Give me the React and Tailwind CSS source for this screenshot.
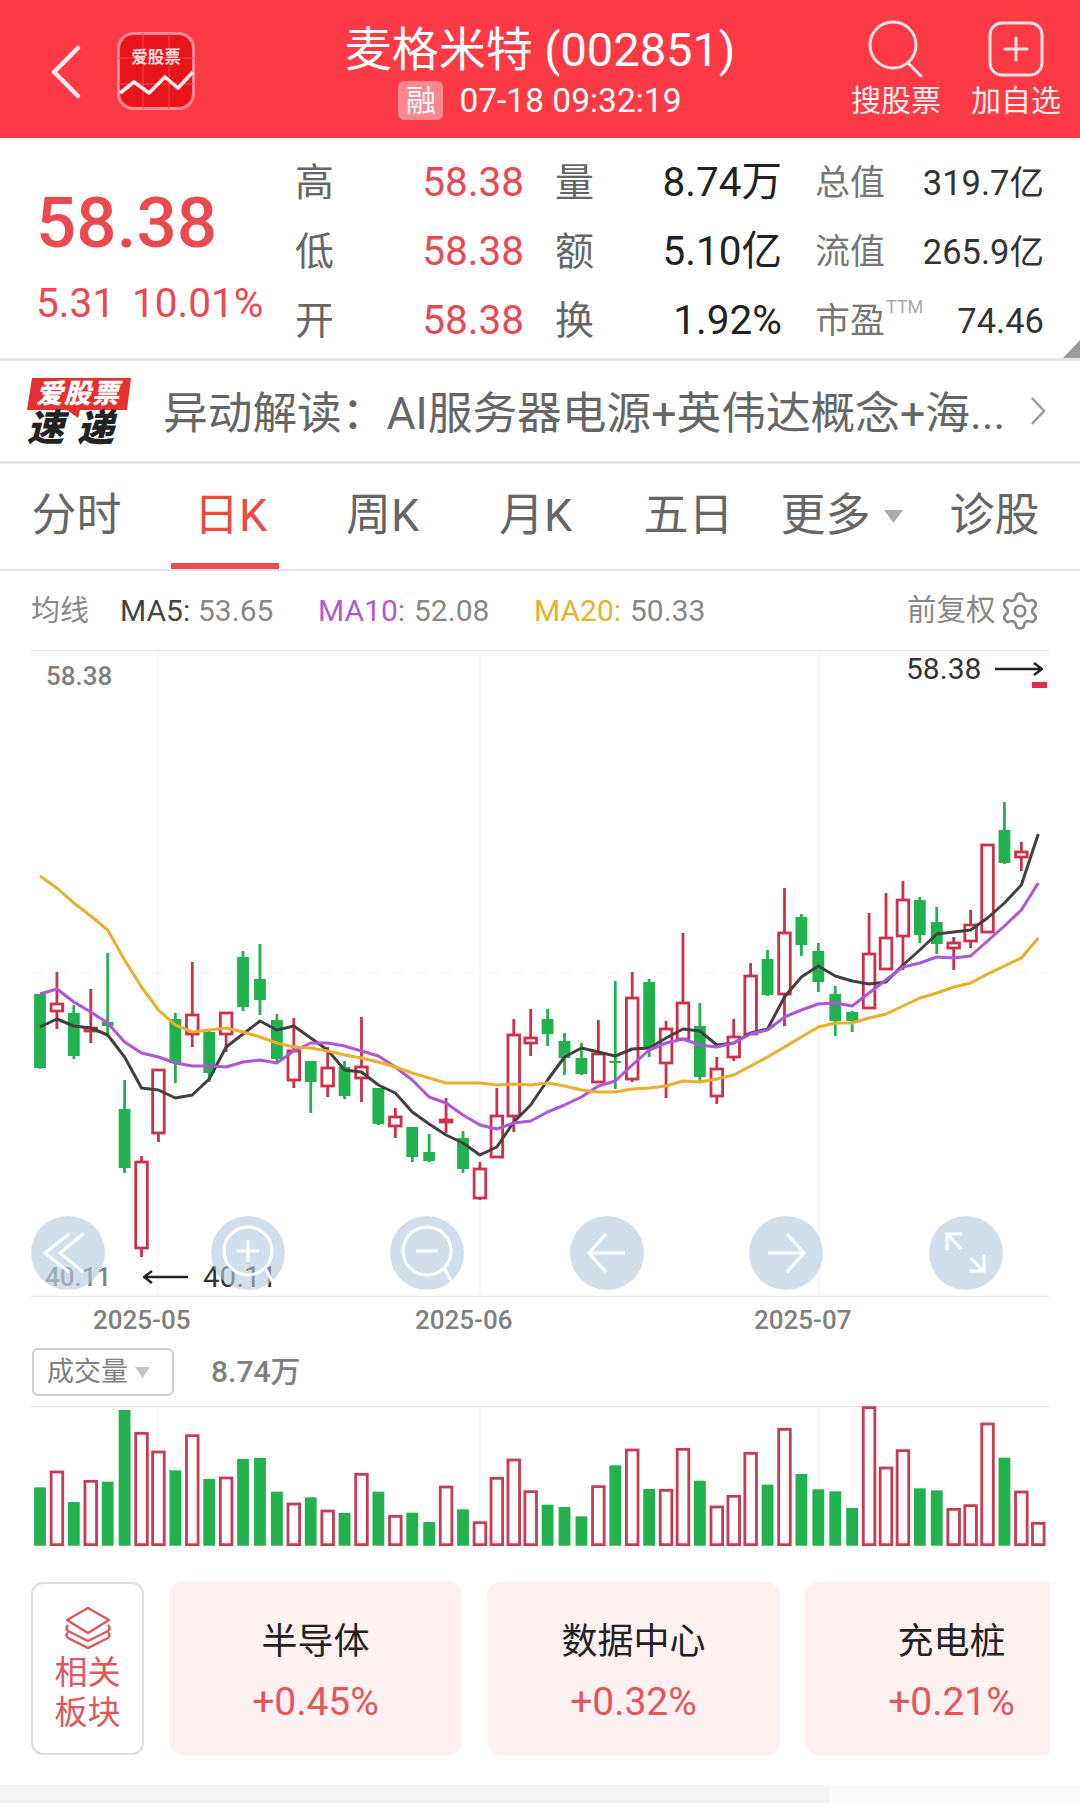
import React from 'react';
import { Settings } from 'lucide-react';

const RED = '#cf3049';
const GREEN = '#21b14f';
const X = (i) => 40 + i * 16.92;

// [colour, high, bodyTop, bodyBottom, low]
const candles = [
  ['g',994,994,1068,1069],['r',972,1003,1012,1029],['g',1005,1013,1056,1059],['r',989,1027,1032,1043],['g',953,1022,1026,1037],
  ['g',1080,1109,1168,1173],['r',1156,1161,1249,1257],['r',1069,1069,1134,1142],['g',1013,1019,1063,1083],['r',962,1014,1035,1047],
  ['g',1030,1032,1073,1082],['r',1012,1012,1035,1052],['g',951,957,1007,1011],['g',944,979,1000,1015],['g',1014,1020,1059,1062],
  ['r',1018,1050,1081,1088],['g',1061,1061,1082,1113],['r',1047,1067,1087,1097],['g',1061,1067,1096,1099],['r',1017,1066,1079,1102],
  ['g',1088,1088,1124,1125],['r',1108,1116,1127,1138],['g',1127,1127,1157,1162],['g',1134,1152,1161,1162],['r',1098,1119,1123,1133],
  ['g',1131,1138,1169,1173],['r',1162,1168,1199,1200],['r',1088,1115,1158,1158],['r',1019,1034,1117,1132],['r',1009,1037,1044,1056],
  ['g',1009,1019,1034,1046],['g',1033,1041,1058,1075],['g',1043,1058,1074,1075],['r',1020,1053,1083,1083],['g',981,1061,1063,1089],
  ['r',972,997,1080,1082],['g',979,982,1048,1057],['r',1021,1028,1064,1098],['r',933,1002,1040,1040],['g',1003,1026,1077,1081],
  ['r',1057,1068,1097,1104],['r',1019,1036,1058,1061],['r',963,975,1035,1035],['g',950,959,995,996],['r',888,932,995,1026],
  ['g',914,917,945,956],['g',943,951,982,992],['g',986,994,1021,1036],['g',1011,1012,1021,1032],['r',913,953,1009,1009],
  ['r',893,937,970,970],['r',881,899,937,970],['g',897,900,935,943],['g',907,922,944,954],['r',937,942,949,970],
  ['r',910,924,942,948],['r',844,844,933,933],['g',802,830,863,864],['r',842,851,858,871],
];

const ma5 = [1027,1019,1026,1028,1035,1057,1088,1090,1098,1095,1079,1047,1034,1021,1030,1026,1038,1050,1070,1072,1085,1093,1112,1124,1135,1143,1155,1147,1122,1105,1080,1057,1048,1052,1056,1049,1048,1038,1029,1031,1045,1043,1033,1029,997,977,966,976,981,984,982,965,950,934,932,930,918,903,885,834];
const ma10 = [994,989,1002,1012,1023,1042,1053,1057,1063,1066,1066,1067,1062,1060,1063,1051,1043,1043,1046,1051,1056,1067,1080,1097,1103,1115,1125,1129,1123,1121,1112,1105,1097,1086,1081,1065,1050,1043,1039,1045,1047,1043,1034,1030,1017,1010,1004,1003,1006,993,980,967,963,957,958,956,941,926,910,883];
const ma20 = [876,888,903,916,930,960,987,1010,1025,1032,1030,1028,1032,1037,1043,1047,1048,1051,1055,1058,1062,1067,1073,1078,1083,1083,1083,1085,1084,1085,1083,1086,1090,1092,1092,1089,1088,1086,1081,1082,1079,1075,1066,1057,1047,1037,1027,1023,1023,1018,1014,1006,998,993,987,983,974,966,958,938];

const volumes = [
  ['g',262],['r',213],['g',306],['r',241],['g',245],['g',30],['r',97],['r',153],['g',211],['r',104],
  ['g',237],['r',231],['g',177],['g',174],['g',275],['r',309],['g',292],['r',330],['g',339],['r',220],
  ['g',275],['r',346],['g',338],['g',366],['r',258],['g',328],['r',365],['r',232],['r',177],['r',272],
  ['g',314],['g',321],['g',349],['r',257],['g',196],['r',147],['g',267],['r',268],['r',145],['g',242],
  ['r',318],['r',286],['r',157],['g',254],['r',85],['g',222],['g',268],['g',274],['g',324],['r',20],
  ['r',201],['r',149],['g',265],['g',271],['r',325],['r',314],['r',69],['g',173],['r',273],['r',367],
];

const pts = (arr) => arr.map((y, i) => `${X(i)},${y}`).join(' ');

function Header() {
  return (
    <div className="grid h-[138px] grid-cols-[1fr_auto_1fr] bg-[#fb3a45] text-white">
      <div className="flex items-start pl-[50px] pt-[44px]">
        <svg width="32" height="56" viewBox="0 0 32 56" fill="none" stroke="#ffe9ea" strokeWidth="4.5" strokeLinecap="round" strokeLinejoin="round">
          <path d="M28 4 4 28l24 24" />
        </svg>
        <div className="relative ml-[35px] -mt-[12px] h-[78px] w-[78px]">
          <svg className="block" width="78" height="78" viewBox="0 0 78 78">
            <rect x="1.5" y="1.5" width="75" height="75" rx="15" fill="#e8141b" stroke="#ff8a90" strokeWidth="3" />
            <path d="M1 26H77M1 52H77M26 1V77M52 1V77" stroke="#f0474c" strokeWidth="1" />
            <path d="M3 61 17 50l15 11 16-16 13 11 15-16" fill="none" stroke="#ffecec" strokeWidth="3.6" strokeLinejoin="round" />
          </svg>
          <span className="absolute left-0 top-[17px] w-[78px] text-center text-[16.5px] font-bold leading-[18px] text-[#ffdcdc]">爱股票</span>
        </div>
      </div>
      <div className="flex flex-col items-center pt-[25px]">
        <div className="text-[47px] leading-[50px] whitespace-nowrap">麦格米特 (002851)</div>
        <div className="mt-[6px] flex h-[39px] items-center">
          <span className="flex h-[39px] w-[45px] items-center justify-center rounded-md bg-white/40 text-[30px] leading-none">融</span>
          <span className="ml-[16px] text-[33.5px] leading-none whitespace-nowrap">07-18 09:32:19</span>
        </div>
      </div>
      <div className="flex justify-end pr-[4px] pt-[20px]">
        <div className="flex w-[120px] flex-col items-center">
          <svg width="60" height="58" viewBox="0 0 60 58" fill="none" stroke="#ffe3e4" strokeWidth="3">
            <circle cx="27" cy="25" r="23" />
            <path d="M42 43 55 56" strokeLinecap="round" />
          </svg>
          <span className="mt-[7px] text-[30px] leading-[32px] text-[#ffeeee]">搜股票</span>
        </div>
        <div className="flex w-[120px] flex-col items-center">
          <svg width="60" height="58" viewBox="0 0 60 58" fill="none" stroke="#ffe3e4" strokeWidth="3">
            <rect x="4" y="3" width="52" height="52" rx="12" />
            <path d="M30 18V40M19 29H41" strokeLinecap="round" />
          </svg>
          <span className="mt-[7px] text-[30px] leading-[32px] text-[#ffeeee]">加自选</span>
        </div>
      </div>
    </div>
  );
}

function StatRow({ a, b, c, d, e, f }) {
  return (
    <div className="flex h-[69px] items-center">
      <span className="mt-[1px] w-[39px] text-[39px] leading-none text-[#666]">{a}</span>
      <span className="w-[190px] text-right text-[40.5px] leading-none text-[#ea4a4f]">{b}</span>
      <span className="mt-[1px] ml-[31px] w-[39px] text-[39px] leading-none text-[#666]">{c}</span>
      <span className="w-[188px] text-right text-[40.5px] leading-none text-[#222]">{d}</span>
      <span className="mt-[2px] ml-[33px] w-[70px] whitespace-nowrap text-[35px] leading-none text-[#777]">{e}</span>
      <span className="mt-[1px] w-[159px] text-right text-[34.5px] leading-none text-[#333]">{f}</span>
    </div>
  );
}

function Quote() {
  return (
    <div className="relative flex h-[223px] border-b-[3px] border-[#e6e6e6] bg-white">
      <div className="w-[295px] pl-[36px] pt-[50px]">
        <div className="text-[71px] font-medium leading-[70px] text-[#ea4a4f]">58.38</div>
        <div className="mt-[25px] flex text-[40.5px] leading-[40px] text-[#ea4a4f] whitespace-nowrap">
          <span>5.31</span>
          <span className="ml-[17px]">10.01%</span>
        </div>
      </div>
      <div className="pt-[10px]">
        <StatRow a="高" b="58.38" c="量" d="8.74万" e="总值" f="319.7亿" />
        <StatRow a="低" b="58.38" c="额" d="5.10亿" e="流值" f="265.9亿" />
        <StatRow
          a="开"
          b="58.38"
          c="换"
          d="1.92%"
          e={
            <span className="relative">
              市盈
              <span className="absolute left-[71px] top-[-3px] text-[18px] text-[#aaa]">TTM</span>
            </span>
          }
          f="74.46"
        />
      </div>
      <svg className="absolute bottom-0 right-0" width="17" height="18" viewBox="0 0 17 18">
        <path d="M17 0V18H0Z" fill="#9b9b9b" />
      </svg>
    </div>
  );
}

function NewsLogo() {
  return (
    <div className="relative ml-[26px] mt-[4px] h-[72px] w-[108px] shrink-0">
      <svg className="block" width="108" height="72" viewBox="0 0 108 72">
        <path d="M6 1H105L101 33H54L52 41 41 33H1Z" fill="#e4312f" />
      </svg>
      <span className="absolute left-[10px] top-[4px] whitespace-nowrap text-[27px] font-black italic leading-[27px] tracking-[1px] text-white">爱股票</span>
      <span className="absolute left-[1px] top-[33px] whitespace-nowrap text-[37px] font-black italic leading-[38px] tracking-[13px] text-[#222]">速递</span>
    </div>
  );
}

function News() {
  return (
    <div className="flex h-[103px] items-center border-b-[3px] border-[#e6e6e6] bg-white">
      <NewsLogo />
      <div className="ml-[29px] mt-[6px] w-[850px] whitespace-nowrap text-[44.7px] leading-none text-[#666]">异动解读：AI服务器电源+英伟达概念+海...</div>
      <svg className="ml-[16px]" width="18" height="32" viewBox="0 0 18 32" fill="none" stroke="#999" strokeWidth="2.5">
        <path d="M3 3 15 16 3 29" />
      </svg>
    </div>
  );
}

function Tabs() {
  const base = 'flex items-center justify-center text-[45px] leading-none text-[#666] whitespace-nowrap';
  return (
    <div className="grid h-[107px] w-[1080px] grid-cols-[153px_153px_153px_153px_153px_153px_153px] items-stretch border-b-2 border-[#e3e3e3] bg-white pb-[2px]">
      <div className={base}>分时</div>
      <div className="relative flex items-center justify-center pl-[2px] text-[45px] leading-none text-[#ea4a3f]">
        日K
        <span className="absolute -bottom-[2px] left-[18px] h-[6px] w-[108px] bg-[#ee4b4f]" />
      </div>
      <div className={base}>周K</div>
      <div className={base}>月K</div>
      <div className={base}>五日</div>
      <div className={base}>
        更多
        <svg className="ml-[13px] mt-[2px]" width="19" height="13" viewBox="0 0 19 13"><path d="M0 0H19L9.5 13Z" fill="#aaa" /></svg>
      </div>
      <div className={base}>诊股</div>
    </div>
  );
}

function MaRow() {
  return (
    <div className="flex h-[79px] items-center pl-[31px] pt-[1px] text-[30px] leading-none text-[#888] whitespace-nowrap">
      <span className="w-[89px] text-[29px]">均线</span>
      <span className="w-[78px] text-[#444]">MA5:</span>
      <span className="w-[120px]">53.65</span>
      <span className="w-[96px] text-[#b358d6]">MA10:</span>
      <span className="w-[120px]">52.08</span>
      <span className="w-[96px] text-[#ecb02f]">MA20:</span>
      <span className="w-[277px]">50.33</span>
      <span className="w-[92px] text-[29.5px]">前复权</span>
      <Settings size={42} strokeWidth={1.5} color="#888" />
    </div>
  );
}

function Candle({ c, i }) {
  const [col, hi, top, bot, lo] = c;
  const x = X(i);
  if (col === 'g') {
    return (
      <g>
        <line x1={x} x2={x} y1={hi} y2={lo} stroke={GREEN} strokeWidth="2.8" />
        <rect x={x - 5.9} y={top} width="11.8" height={bot - top} fill={GREEN} />
      </g>
    );
  }
  return (
    <g>
      <line x1={x} x2={x} y1={hi} y2={lo} stroke={RED} strokeWidth="2.8" />
      <rect x={x - 5.8} y={top + 1} width="11.6" height={Math.max(bot - top - 2, 1)} fill="#fff" stroke={RED} strokeWidth="2.8" />
    </g>
  );
}

const iconProps = { width: 74, height: 74, viewBox: '0 0 74 74', fill: 'none', stroke: '#fff', strokeWidth: 3 };
const roundIcons = [
  <path d="M38 18 14 37l24 19M52 18 29 37l23 19" />,
  <><circle cx="37" cy="35" r="24" /><path d="M54 52 65 72M37 24V46M26 35H48" /></>,
  <><circle cx="37" cy="35" r="24" /><path d="M54 52 65 72M26 35H48" /></>,
  <path d="M36 18 19 37l17 19M19 37H55" />,
  <path d="M38 18 55 37 38 56M55 37H19" />,
  <path d="M20 20 32 33M42 42 53 54M18 34V18H33M55 39V55H40" />,
];

function Chart() {
  return (
    <div className="relative h-[647px] w-[1080px] bg-white">
      <svg className="block" width="1080" height="647" viewBox="0 650 1080 647">
        <path d="M31 650.5H1049M31 1296.5H1049" stroke="#e6e6e6" strokeWidth="1.5" />
        <path d="M158 651V1296M480 651V1296M819 651V1296" stroke="#f1f1f1" strokeWidth="1" />
        <path d="M31 973H1049" stroke="#f3f3f3" strokeWidth="1" strokeDasharray="12 12" />
        {candles.map((c, i) => <Candle key={i} c={c} i={i} />)}
        <rect x="1032" y="682" width="15" height="6" fill="#dc2d4a" />
        <polyline points={pts(ma5)} fill="none" stroke="#414141" strokeWidth="3" strokeLinejoin="round" />
        <polyline points={pts(ma10)} fill="none" stroke="#b055d8" strokeWidth="3" strokeLinejoin="round" />
        <polyline points={pts(ma20)} fill="none" stroke="#ecae2c" strokeWidth="3" strokeLinejoin="round" />
      </svg>
      <span className="absolute left-[46px] top-[13px] text-[26px] font-medium leading-[26px] text-[#808080]">58.38</span>
      <div className="absolute left-[906px] top-[6px] flex items-center text-[30px] leading-[26px] text-[#333]">
        58.38
        <svg className="ml-[14px]" width="48" height="16" viewBox="0 0 48 16" fill="none" stroke="#222" strokeWidth="2.4"><path d="M0 8H47M39 2 47 8 39 14" /></svg>
      </div>
      <span className="absolute left-[45px] top-[614px] text-[26px] font-medium leading-[26px] text-[#808080]">40.11</span>
      <div className="absolute left-[143px] top-[614px] flex items-center text-[29.5px] leading-[26px] text-[#333]">
        <svg className="mr-[15px]" width="45" height="16" viewBox="0 0 45 16" fill="none" stroke="#222" strokeWidth="2.4"><path d="M45 8H1M9 2 1 8 9 14" /></svg>
        40.11
      </div>
      <div className="absolute left-[31px] top-[566px] flex gap-[105.6px]">
        {roundIcons.map((ic, i) => (
          <div key={i} className="h-[74px] w-[74px] overflow-hidden rounded-full bg-[#b4cadc]/60">
            <svg {...iconProps}>{ic}</svg>
          </div>
        ))}
      </div>
    </div>
  );
}

function DateAxis() {
  return (
    <div className="flex h-[46px] items-center pb-[1px] text-[26px] font-medium leading-none text-[#808080]">
      <span className="ml-[93px] w-[322px]">2025-05</span>
      <span className="w-[339px]">2025-06</span>
      <span>2025-07</span>
    </div>
  );
}

function VolumeHead() {
  return (
    <div className="flex h-[63px] items-start pl-[32px] pt-[5px]">
      <div className="flex h-[48px] w-[142px] items-center rounded-md border-2 border-[#cfcfcf] pl-[13px] text-[27px] leading-none text-[#808080]">
        成交量
        <svg className="ml-[7px]" width="15" height="11" viewBox="0 0 15 11"><path d="M0 0H15L7.5 11Z" fill="#c4c4c4" /></svg>
      </div>
      <span className="ml-[37px] mt-[7px] text-[30px] font-medium leading-[34px] text-[#808080]">8.74万</span>
    </div>
  );
}

function Volume() {
  const base = 1545.7;
  return (
    <svg className="block" width="1080" height="150" viewBox="0 1406 1080 150">
      <path d="M31 1406.5H1049" stroke="#e6e6e6" strokeWidth="1.5" />
      <path d="M158 1407V1546M480 1407V1546M819 1407V1546" stroke="#f1f1f1" strokeWidth="1" />
      {volumes.map(([c, z], i) => {
        const top = 1400 + z / 3;
        const x = X(i);
        return c === 'g' ? (
          <rect key={i} x={x - 5.9} y={top} width="11.8" height={base - top} fill={GREEN} />
        ) : (
          <rect key={i} x={x - 5.8} y={top + 1} width="11.6" height={base - top - 2} fill="#fff" stroke="#c93b52" strokeWidth="2.8" />
        );
      })}
    </svg>
  );
}

function SectorCard({ name, pct }) {
  return (
    <div className="flex h-[173px] w-[293px] shrink-0 flex-col items-center rounded-[14px] bg-[#fef1f1] pt-[41px]">
      <span className="text-[36px] leading-[38px] text-[#222]">{name}</span>
      <span className="mt-[21px] text-[39px] leading-[40px] text-[#e2575c]">{pct}</span>
    </div>
  );
}

function Sectors() {
  return (
    <div className="mt-[26px] flex pl-[31px]">
      <div className="flex h-[173px] w-[113px] shrink-0 flex-col items-center rounded-xl border-2 border-[#dedede] pt-[23px] text-[33px] leading-[40px] text-[#e0575a]">
        <svg width="46" height="42" viewBox="0 0 46 42" fill="none" stroke="#e0575a" strokeWidth="2.4" strokeLinejoin="round">
          <path d="M23 1 44 13 23 26 2 13Z" />
          <path d="M3 18C1 20 1 22 3 24L23 34 43 24C45 22 45 20 43 18" />
          <path d="M3 25C1 27 1 29 3 31L23 41 43 31C45 29 45 27 43 25" />
        </svg>
        <span className="mt-[4px]">相关</span>
        <span>板块</span>
      </div>
      <div className="ml-[25px] flex w-[881px] gap-[25px] overflow-hidden">
        <SectorCard name="半导体" pct="+0.45%" />
        <SectorCard name="数据中心" pct="+0.32%" />
        <SectorCard name="充电桩" pct="+0.21%" />
      </div>
    </div>
  );
}

export default function App() {
  return (
    <div className="h-[1820px] w-[1080px] overflow-hidden bg-white font-['Roboto','Noto_Sans_CJK_SC',sans-serif]">
      <Header />
      <Quote />
      <News />
      <Tabs />
      <MaRow />
      <Chart />
      <DateAxis />
      <VolumeHead />
      <Volume />
      <Sectors />
      <div className="mt-[30px] flex h-[18px]">
        <div className="w-[830px] bg-[#f5f5f5]" />
        <div className="w-[250px] bg-[#fcfcfc]" />
      </div>
    </div>
  );
}
